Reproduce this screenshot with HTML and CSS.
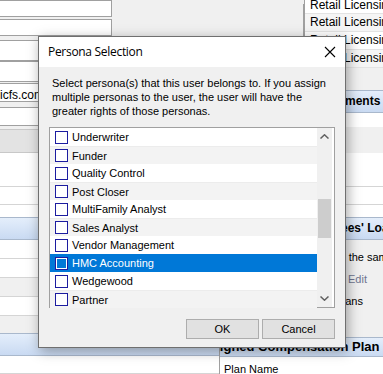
FILE: index.html
```html
<!DOCTYPE html>
<html>
<head>
    <title>Persona Selection</title>
    <link rel="stylesheet" href="styles.css">
</head>
<body>
    <div class="app">
        <div class="top">
            <div class="fields">
                <div class="field f1"></div>
                <div class="field f2"></div>
                <div class="field f3"></div>
                <div class="field f4"></div>
                <div class="field f5">icfs.com</div>
                <div class="field f6"></div>
            </div>
            <div class="middle"></div>
            <div class="licenses">
                <div class="lic first">Retail Licensing</div>
                <div class="lic alt">Retail Licensing</div>
                <div class="lic">Retail Licensing</div>
                <div class="lic alt">Retail Licensing</div>
                <div class="lic-empty"></div>
                <div class="band right-band">Assignments</div>
            </div>
        </div>
        <div class="mid">
            <div class="grey-head"></div>
            <div class="grid-rows">
                <div class="grow tall"></div>
                <div class="grow short"></div>
            </div>
        </div>
        <div class="band wide">Assignees' Loans</div>
        <div class="loans">
            <div class="loan-left">
                <div class="grow"></div>
                <div class="grow"></div>
                <div class="grow alt"></div>
                <div class="grow"></div>
            </div>
            <div class="loan-right">
                <p class="same">Loans with the same</p>
                <p class="link">Edit</p>
                <p class="plans">Loans</p>
            </div>
        </div>
        <div class="bottom">
            <div class="bottom-left">
                <div class="band"></div>
                <div class="grow short"></div>
            </div>
            <div class="bottom-right">
                <div class="band">Assigned Compensation Plan</div>
                <div class="plan-row">Plan Name</div>
            </div>
        </div>
    </div>

    <div class="dialog">
        <div class="title-bar">
            <span class="title">Persona Selection</span>
            <svg class="close" width="12" height="12" viewBox="0 0 12 12">
                <path d="M1 1 L11 11 M11 1 L1 11" stroke="#000" stroke-width="1.1" fill="none"/>
            </svg>
        </div>
        <div class="dialog-body">
            <p class="intro">Select persona(s) that this user belongs to. If you assign<br>multiple personas to the user, the user will have the<br>greater rights of those personas.</p>
            <div class="listbox">
                <div class="items">
                    <div class="item"><span class="check"></span>Underwriter</div>
                    <div class="item"><span class="check"></span>Funder</div>
                    <div class="item"><span class="check"></span>Quality Control</div>
                    <div class="item"><span class="check"></span>Post Closer</div>
                    <div class="item"><span class="check"></span>MultiFamily Analyst</div>
                    <div class="item"><span class="check"></span>Sales Analyst</div>
                    <div class="item"><span class="check"></span>Vendor Management</div>
                    <div class="item selected"><span class="check"></span>HMC Accounting</div>
                    <div class="item"><span class="check"></span>Wedgewood</div>
                    <div class="item"><span class="check"></span>Partner</div>
                </div>
                <div class="scrollbar">
                    <svg class="arrow" width="9" height="5" viewBox="0 0 9 5">
                        <path d="M0.5 4.5 L4.5 0.8 L8.5 4.5" stroke="#606060" stroke-width="1.5" fill="none"/>
                    </svg>
                    <div class="track"><div class="thumb"></div></div>
                    <svg class="arrow" width="9" height="5" viewBox="0 0 9 5">
                        <path d="M0.5 0.5 L4.5 4.2 L8.5 0.5" stroke="#606060" stroke-width="1.5" fill="none"/>
                    </svg>
                </div>
            </div>
            <div class="buttons">
                <button class="btn">OK</button>
                <button class="btn">Cancel</button>
            </div>
        </div>
    </div>
</body>
</html>
```

FILE: styles.css
```css
body {
    margin: 0;
    width: 383px;
    height: 374px;
    overflow: hidden;
    background-color: #f0f0f0;
    font-family: "Liberation Sans", Arial, sans-serif;
    font-size: 11px;
    color: #000;
    position: relative;
}

p {
    margin: 0;
}

/* background application */
.app {
    width: 383px;
    height: 374px;
    overflow: hidden;
    display: flex;
    flex-direction: column;
}

.app > div {
    flex-shrink: 0;
}

.top {
    display: flex;
    height: 127px;
}

.fields {
    width: 112px;
    display: flex;
    flex-direction: column;
}

.field {
    background-color: #fff;
    border: 1px solid #a0a0a0;
    border-left: none;
    box-sizing: border-box;
    padding: 2px 2px 0 0;
    font-size: 12px;
    line-height: 14px;
}

.f1 { height: 17px; }
.f2 { height: 17px; margin-top: 2px; }
.f3 { height: 21px; margin-top: 4px; margin-right: -80px; }
.f4 { height: 21px; margin-right: -80px; }
.f5 { height: 19px; margin-top: 1px; margin-right: -80px; padding-top: 4px; }
.f6 { height: 19px; margin-top: 5px; margin-right: -80px; }

.middle {
    flex: 1;
}

.licenses {
    width: 78px;
    border-left: 1px solid #a0a0a0;
    box-shadow: -5px 0 0 -4px #a0a0a0;
    display: flex;
    flex-direction: column;
    background-color: #fff;
}

.lic {
    height: 17px;
    line-height: 17px;
    padding-left: 5px;
    font-size: 12px;
    white-space: nowrap;
    overflow: hidden;
    border-bottom: 1px solid #e3e3e3;
}

.lic.first {
    height: 13px;
    line-height: 10px;
}

.lic.alt {
    background-color: #f5f5f5;
}

.lic-empty {
    flex: 1;
    background-color: #f0f0f0;
}

.band {
    height: 23px;
    box-sizing: border-box;
    line-height: 21px;
    background: linear-gradient(#e4eefb, #c9daf2);
    border-top: 1px solid #a9b8cc;
    border-bottom: 1px solid #a9b8cc;
    font-weight: bold;
    font-size: 12px;
    white-space: nowrap;
    overflow: hidden;
    padding-left: 6px;
}

.right-band {
    margin-left: -34px;
    margin-bottom: 14px;
    padding-left: 34px;
}

.mid {
    height: 90px;
    display: flex;
    flex-direction: column;
}

.grey-head {
    height: 22px;
    margin-top: 2px;
    width: 112px;
    background-color: #e3e3e3;
    border-top: 1px solid #c8c8c8;
    border-bottom: 1px solid #c8c8c8;
}

.grid-rows {
    flex: 1;
    background-color: #fff;
}

.grow {
    height: 18px;
    border-bottom: 1px solid #d5d5d5;
    background-color: #fff;
}

.grow.tall {
    height: 33px;
}

.grow.short {
    height: 17px;
}

.grow.alt {
    background-color: #f0f0f0;
}

.band.wide {
    padding-left: 301px;
}

.loans {
    height: 93px;
    display: flex;
}

.loan-left {
    width: 220px;
}

.loan-right {
    flex: 1;
    padding-top: 7px;
    font-size: 11px;
    line-height: 21px;
    white-space: nowrap;
    overflow: hidden;
}

.loan-right .same {
    padding-left: 73px;
}

.loan-right .link {
    color: #6f7591;
    line-height: 23px;
    padding-left: 128px;
}

.loan-right .plans {
    padding-left: 113px;
}

.bottom {
    display: flex;
    height: 41px;
}

.bottom-left {
    width: 219px;
}

.bottom-right {
    flex: 1;
    border-left: 1px solid #a0a0a0;
    margin-top: 2px;
    padding-top: 2px;
}

.bottom-right .band {
    height: 20px;
    line-height: 18px;
    font-size: 13px;
    padding-left: 0;
    text-indent: -24px;
}

.plan-row {
    background-color: #fff;
    padding: 6px 0 0 4px;
    height: 20px;
}

/* dialog */
.dialog {
    position: absolute;
    left: 38px;
    top: 36px;
    width: 306px;
    height: 310px;
    border: 1px solid #6f6f6f;
    background-color: #f0f0f0;
    box-shadow: 2px 3px 12px rgba(0, 0, 0, 0.35);
    display: flex;
    flex-direction: column;
}

.title-bar {
    height: 30px;
    background-color: #fff;
    display: flex;
    align-items: center;
    justify-content: space-between;
    padding: 0 9px 0 9px;
}

.title {
    font-family: "Open Sans", sans-serif;
    font-size: 12px;
    letter-spacing: -0.3px;
    margin-top: -1px;
}

.dialog-body {
    flex: 1;
    padding: 9px 10px 0 10px;
}

.intro {
    line-height: 14px;
    padding-left: 3px;
    white-space: nowrap;
}

.listbox {
    margin-top: 9px;
    height: 179px;
    border: 1px solid #a0a0a0;
    background-color: #fff;
    display: flex;
}

.items {
    width: 268px;
}

.item {
    height: 18px;
    line-height: 18px;
    display: flex;
    align-items: center;
    gap: 4px;
    padding-left: 5px;
    box-sizing: border-box;
}

.item:nth-child(even) {
    background-color: #f3f3f3;
    border-top: 1px solid #ececec;
}

.item.selected {
    background-color: #0078d7;
    border-top: none;
    color: #fff;
}

.check {
    width: 11px;
    height: 11px;
    border: 1px solid #1c1ca0;
    background-color: #fff;
    flex-shrink: 0;
}

.item.selected .check {
    background-color: #0078d7;
    box-shadow: inset 0 0 0 1px #fff;
}

.scrollbar {
    width: 15px;
    margin-right: 2px;
    background-color: #f0f0f0;
    display: flex;
    flex-direction: column;
    align-items: center;
}

.arrow {
    margin: 6px 0;
}

.track {
    flex: 1;
    width: 100%;
    padding-top: 54px;
}

.thumb {
    height: 39px;
    background-color: #cdcdcd;
    margin: 0 1px;
}

.buttons {
    display: flex;
    justify-content: flex-end;
    gap: 3px;
    margin-top: 11px;
}

.btn {
    width: 73px;
    height: 20px;
    background-color: #e1e1e1;
    border: 1px solid #adadad;
    font-family: "Liberation Sans", Arial, sans-serif;
    font-size: 11px;
    color: #000;
    padding: 0;
}
```
